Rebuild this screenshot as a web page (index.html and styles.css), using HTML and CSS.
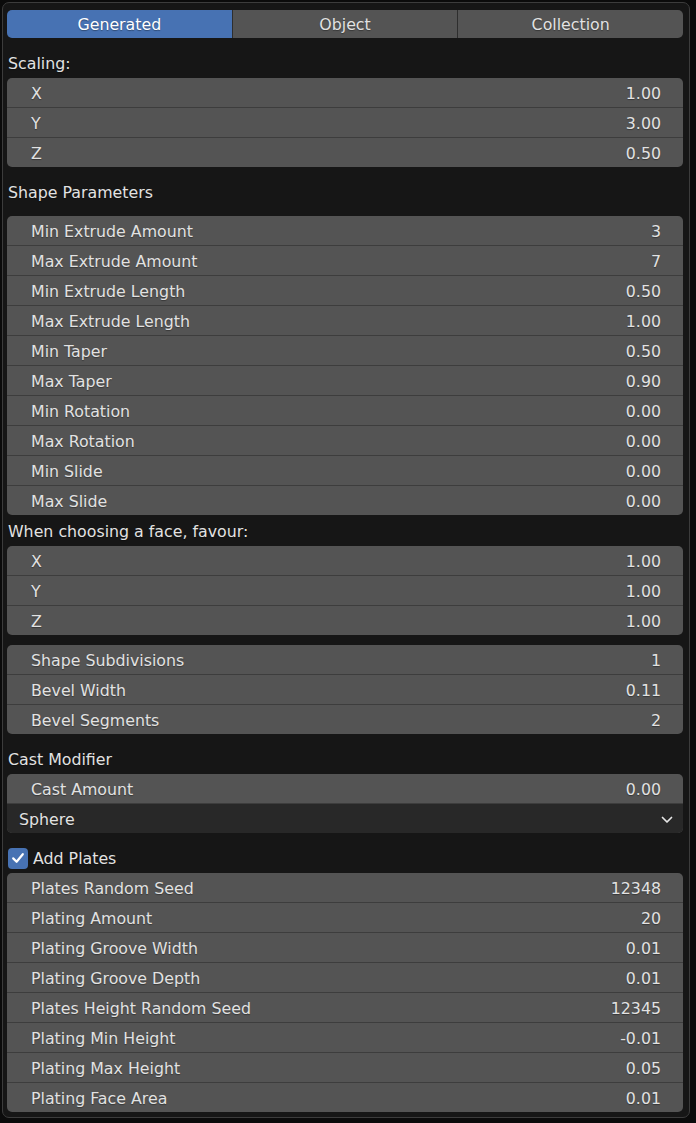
FILE: index.html
```html
<!DOCTYPE html>
<html>
<head>
<meta charset="utf-8">
<link rel="stylesheet" href="styles.css">
</head>
<body>
<div class="panel">
  <div class="tabs">
    <div class="tab active">Generated</div>
    <div class="tab">Object</div>
    <div class="tab">Collection</div>
  </div>

  <div class="label gap">Scaling:</div>
  <div class="group">
    <div class="row"><span>X</span><span>1.00</span></div>
    <div class="row"><span>Y</span><span>3.00</span></div>
    <div class="row"><span>Z</span><span>0.50</span></div>
  </div>

  <div class="label gap">Shape Parameters</div>
  <div class="group gap-s">
    <div class="row"><span>Min Extrude Amount</span><span>3</span></div>
    <div class="row"><span>Max Extrude Amount</span><span>7</span></div>
    <div class="row"><span>Min Extrude Length</span><span>0.50</span></div>
    <div class="row"><span>Max Extrude Length</span><span>1.00</span></div>
    <div class="row"><span>Min Taper</span><span>0.50</span></div>
    <div class="row"><span>Max Taper</span><span>0.90</span></div>
    <div class="row"><span>Min Rotation</span><span>0.00</span></div>
    <div class="row"><span>Max Rotation</span><span>0.00</span></div>
    <div class="row"><span>Min Slide</span><span>0.00</span></div>
    <div class="row"><span>Max Slide</span><span>0.00</span></div>
  </div>

  <div class="label gap-xs">When choosing a face, favour:</div>
  <div class="group">
    <div class="row"><span>X</span><span>1.00</span></div>
    <div class="row"><span>Y</span><span>1.00</span></div>
    <div class="row"><span>Z</span><span>1.00</span></div>
  </div>

  <div class="group gap">
    <div class="row"><span>Shape Subdivisions</span><span>1</span></div>
    <div class="row"><span>Bevel Width</span><span>0.11</span></div>
    <div class="row"><span>Bevel Segments</span><span>2</span></div>
  </div>

  <div class="label gap">Cast Modifier</div>
  <div class="group">
    <div class="row"><span>Cast Amount</span><span>0.00</span></div>
    <div class="row select"><span>Sphere</span>
      <svg class="chev" width="12" height="8" viewBox="0 0 12 8"><path d="M1.5 1.5 L6 6 L10.5 1.5" fill="none" stroke="#e6e6e6" stroke-width="1.7" stroke-linecap="round" stroke-linejoin="round"/></svg>
    </div>
  </div>

  <div class="check-row gap">
    <span class="checkbox">
      <svg width="16" height="16" viewBox="0 0 16 16"><path d="M3.2 8.4 L6.6 11.8 L12.8 4.2" fill="none" stroke="#ffffff" stroke-width="2.2" stroke-linecap="round" stroke-linejoin="round"/></svg>
    </span>
    <span class="check-label">Add Plates</span>
  </div>
  <div class="group">
    <div class="row"><span>Plates Random Seed</span><span>12348</span></div>
    <div class="row"><span>Plating Amount</span><span>20</span></div>
    <div class="row"><span>Plating Groove Width</span><span>0.01</span></div>
    <div class="row"><span>Plating Groove Depth</span><span>0.01</span></div>
    <div class="row"><span>Plates Height Random Seed</span><span>12345</span></div>
    <div class="row"><span>Plating Min Height</span><span>-0.01</span></div>
    <div class="row"><span>Plating Max Height</span><span>0.05</span></div>
    <div class="row"><span>Plating Face Area</span><span>0.01</span></div>
  </div>
</div>
</body>
</html>
```

FILE: styles.css
```css
html, body {
  margin: 0;
  padding: 0;
  background: #0b0b0b;
}

body {
  font-family: "DejaVu Sans", "Liberation Sans", sans-serif;
  font-size: 15.8px;
  color: #e2e2e2;
  padding: 2px;
  width: 692px;
  height: 1119px;
  box-sizing: border-box;
}

.panel {
  width: 688px;
  box-sizing: border-box;
  border: 1px solid #3c3c3c;
  border-radius: 7px;
  background: #161616;
  padding: 7px 6px 5px 4px;
  display: flex;
  flex-direction: column;
}

.tabs {
  display: flex;
  height: 28px;
  border-radius: 5px;
  overflow: hidden;
}

.tab {
  flex: 1;
  background: #545454;
  display: flex;
  align-items: center;
  justify-content: center;
  border-left: 1px solid #2e2e2e;
  text-shadow: 0 1px 1px rgba(0, 0, 0, 0.35);
}

.tab:first-child {
  border-left: none;
}

.tab.active {
  background: #4772b3;
  color: #ffffff;
}

.label {
  height: 30px;
  display: flex;
  align-items: center;
  padding-left: 1px;
  text-shadow: 0 1px 1px rgba(0, 0, 0, 0.35);
}

.gap { margin-top: 10px; }
.gap-s { margin-top: 9px; }
.gap-xs { margin-top: 1px; }

.group {
  border-radius: 5px;
  overflow: hidden;
  background: #545454;
  display: flex;
  flex-direction: column;
}

.row {
  height: 28px;
  padding: 1px 22px 0 24px;
  display: flex;
  align-items: center;
  justify-content: space-between;
  border-bottom: 1px solid #3d3d3d;
  text-shadow: 0 1px 1px rgba(0, 0, 0, 0.35);
}

.row:last-child {
  border-bottom: none;
}

.row.select {
  background: #282828;
  padding: 1px 10px 0 12px;
}

.chev {
  display: block;
  margin-top: 2px;
}

.check-row {
  height: 30px;
  display: flex;
  align-items: center;
  gap: 5px;
  padding-left: 1px;
}

.checkbox {
  width: 20px;
  height: 21px;
  border-radius: 4px;
  background: #4772b3;
  display: flex;
  align-items: center;
  justify-content: center;
}

.checkbox svg {
  display: block;
}

.check-label {
  text-shadow: 0 1px 1px rgba(0, 0, 0, 0.35);
}
```
